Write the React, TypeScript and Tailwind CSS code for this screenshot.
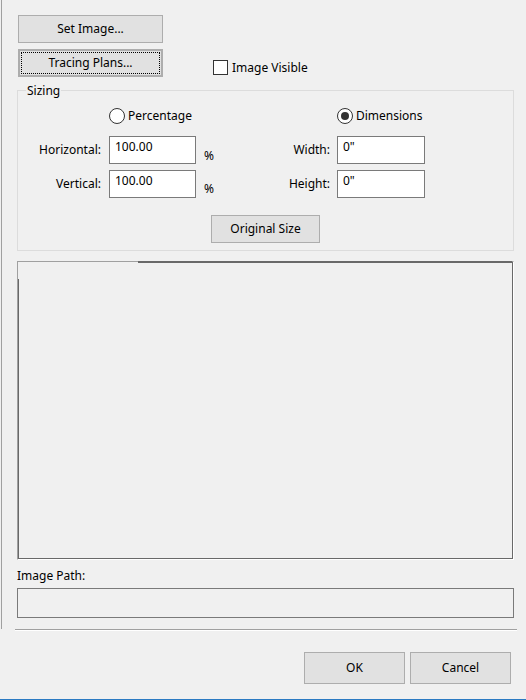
import React from 'react';

const btn =
  'flex items-center justify-center bg-[#e1e1e1] border border-[#adadad] text-black';

const Field = ({ value, w }: { value: string; w: string }) => (
  <div className={`${w} h-[28px] bg-white border border-[#7a7a7a] px-[5px] pt-[2px] leading-[16px]`}>
    {value}
  </div>
);

const Radio = ({ label, checked }: { label: string; checked?: boolean }) => (
  <div className="flex items-center h-[16px]">
    <div className="w-[16px] h-[16px] rounded-full border border-[#333] bg-white flex items-center justify-center">
      {checked && <div className="w-[8px] h-[8px] rounded-full bg-[#333]" />}
    </div>
    <span className="ml-[3px] leading-[16px]">{label}</span>
  </div>
);

const App: React.FC = () => {
  return (
    <div className="w-[526px] h-[700px] bg-[#f0f0f0] flex flex-col text-[12px] text-black font-['Noto_Sans',sans-serif]">
      {/* main panel */}
      <div className="ml-px h-[629px] border-l border-[#a0a0a0] pl-[15px] pr-[12px] pt-[15px] flex flex-col">
        <button className={`${btn} ml-px w-[145px] h-[28px]`}>Set Image...</button>

        <div className="mt-[6px] flex items-start">
          <button className={`${btn} relative ml-px w-[145px] h-[28px] border-2 border-[#0078d7]`}>
            <span className="absolute inset-[1px] border border-dotted border-black" />
            <span className="relative">Tracing Plans...</span>
          </button>
          <div className="ml-[50px] mt-[9px] flex items-center">
            <div className="w-[15px] h-[15px] border border-[#333] bg-white" />
            <span className="ml-[4px] leading-[16px] mt-[2px]">Image Visible</span>
          </div>
        </div>

        {/* sizing group */}
        <div className="relative mt-[13px] w-[497px] border border-[#dcdcdc] pt-[17px] pb-[7px] flex flex-col">
          <span className="absolute left-[8px] top-[-8px] px-px bg-[#f0f0f0] leading-[16px]">Sizing</span>

          <div className="flex">
            <div className="ml-[91px] w-[228px]">
              <Radio label="Percentage" />
            </div>
            <Radio label="Dimensions" checked />
          </div>

          <div className="mt-[12px] flex items-center">
            <div className="w-[83px] text-right leading-[16px]">Horizontal:</div>
            <div className="ml-[8px]">
              <Field value="100.00" w="w-[87px]" />
            </div>
            <div className="w-[134px] h-[28px] flex">
              <span className="ml-[8px] mt-[12px] leading-[16px]">%</span>
              <span className="ml-auto self-center leading-[16px]">Width:</span>
            </div>
            <div className="ml-[7px]">
              <Field value={'0"'} w="w-[88px]" />
            </div>
          </div>

          <div className="mt-[6px] flex items-center">
            <div className="w-[83px] text-right leading-[16px]">Vertical:</div>
            <div className="ml-[8px]">
              <Field value="100.00" w="w-[87px]" />
            </div>
            <div className="w-[134px] h-[28px] flex">
              <span className="ml-[8px] mt-[11px] leading-[16px]">%</span>
              <span className="ml-auto self-center leading-[16px]">Height:</span>
            </div>
            <div className="ml-[7px]">
              <Field value={'0"'} w="w-[88px]" />
            </div>
          </div>

          <button className={`${btn} mt-[17px] mx-auto w-[109px] h-[28px]`}>Original Size</button>
        </div>

        {/* preview area */}
        <div className="mt-[10px] w-[497px] h-[299px] flex border-t border-l border-[#a0a0a0] border-r border-b border-r-white border-b-white">
          <div className="relative flex-1 border-r border-b border-[#696969]">
            <span className="absolute top-[-1px] left-[120px] right-0 h-[2px] bg-[#696969]" />
            <span className="absolute left-0 top-[17px] bottom-0 w-px bg-[#696969]" />
          </div>
        </div>

        <div className="mt-[8px] leading-[16px]">Image Path:</div>
        <div className="mt-[4px] w-[497px] h-[30px] border border-[#7a7a7a]" />
      </div>

      <div className="ml-[15px] w-[502px] h-[2px] border-t border-[#a0a0a0] border-b border-b-white" />

      <div className="mt-[21px] flex justify-end pr-[15px] gap-[5px]">
        <button className={`${btn} w-[101px] h-[32px]`}>OK</button>
        <button className={`${btn} w-[101px] h-[32px]`}>Cancel</button>
      </div>

      <div className="mt-auto h-px bg-[#2a7ac2]" />
    </div>
  );
};

export default App;
